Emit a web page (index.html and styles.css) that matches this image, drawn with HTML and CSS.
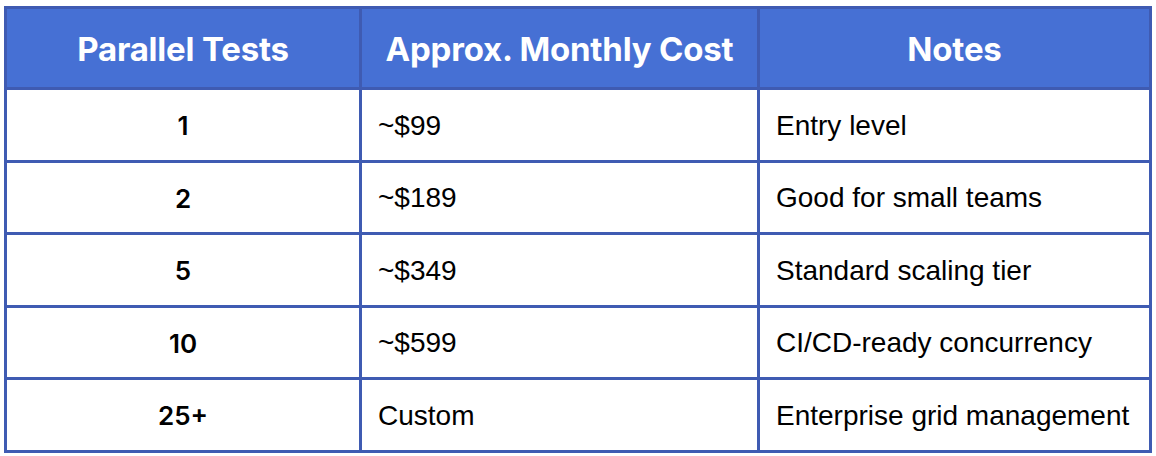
FILE: index.html
```html
<!DOCTYPE html>
<html lang="en">
<head>
<meta charset="utf-8">
<title>Parallel Tests Pricing</title>
<link rel="stylesheet" href="styles.css">
</head>
<body>
<table class="pricing">
  <colgroup>
    <col class="c1">
    <col class="c2">
    <col class="c3">
  </colgroup>
  <thead>
    <tr>
      <th>Parallel Tests</th>
      <th>Approx. Monthly Cost</th>
      <th>Notes</th>
    </tr>
  </thead>
  <tbody>
    <tr><td class="num">1</td><td>~$99</td><td>Entry level</td></tr>
    <tr><td class="num">2</td><td>~$189</td><td>Good for small teams</td></tr>
    <tr><td class="num">5</td><td>~$349</td><td>Standard scaling tier</td></tr>
    <tr><td class="num">10</td><td>~$599</td><td>CI/CD-ready concurrency</td></tr>
    <tr><td class="num">25+</td><td>Custom</td><td>Enterprise grid management</td></tr>
  </tbody>
</table>
</body>
</html>
```
FILE: styles.css
```css
html, body {
  margin: 0;
  padding: 0;
  background: #ffffff;
}
body {
  padding: 6px 4px 0 4px;
}
.pricing {
  width: 1148px;
  table-layout: fixed;
  border-collapse: separate;
  border-spacing: 3px;
  background: #3f5bb2;
}
.c1 { width: 352px; }
.c2 { width: 395px; }
.c3 { width: 389px; }
.pricing th {
  background: #4670d4;
  color: #ffffff;
  height: 76px;
  padding: 2px 0 0 0;
  font-family: Inter, "Open Sans", sans-serif;
  font-weight: 700;
  font-size: 33px;
  letter-spacing: -0.2px;
  text-align: center;
}
.pricing td {
  background: #ffffff;
  color: #000000;
  height: 67.5px;
  padding: 2px 16px 0 16px;
  font-family: "Liberation Sans", Arial, sans-serif;
  font-size: 28px;
  text-align: left;
}
.pricing td.num {
  text-align: center;
  font-family: Inter, "Liberation Sans", sans-serif;
  font-weight: 600;
  font-size: 26px;
}
```
